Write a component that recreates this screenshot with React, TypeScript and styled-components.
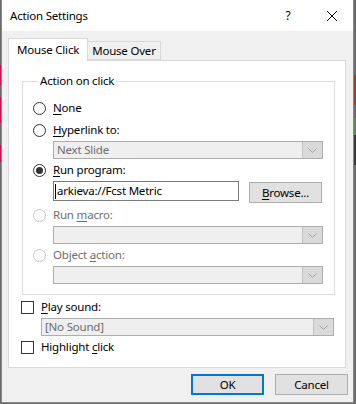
import React from "react";
import styled, { createGlobalStyle } from "styled-components";

const GlobalStyle = createGlobalStyle`
  html, body {
    margin: 0;
    padding: 0;
    background: #6b6b6b;
  }
  body {
    background:
      linear-gradient(#6b6b6b 0 65px, #c8104a 65px 85px, #6b6b6b 85px 97px, #c8104a 97px 123px, #6b6b6b 123px 145px, #c8104a 145px 162px, #6b6b6b 162px) left / 1px 100% no-repeat,
      linear-gradient(#6b6b6b 0 75px, #a03a2a 75px 105px, #6b6b6b 105px 118px, #5a8a5a 118px 135px, #3a3a3a 135px 165px, #6b6b6b 165px) right / 2px 100% no-repeat,
      #6b6b6b;
    font-family: "Noto Sans", "Open Sans", sans-serif;
    font-size: 11.5px;
    letter-spacing: -0.2px;
    color: #000;
  }
`;

const Window = styled.div`
  margin-left: 1px;
  width: 353px;
  height: 403px;
  box-sizing: border-box;
  border: 1px solid #888;
  border-top: none;
  background: #f0f0f0;
  display: flex;
  flex-direction: column;
`;

const TitleBar = styled.div`
  height: 31px;
  background: #fff;
  display: flex;
  align-items: center;
  padding-left: 8px;
`;

const Title = styled.div`
  flex: 1;
  line-height: 16px;
`;

const TitleButton = styled.div<{ $w: number }>`
  width: ${(p) => p.$w}px;
  height: 31px;
  display: flex;
  align-items: center;
  justify-content: center;
  font-size: 12px;
`;

const Body = styled.div`
  flex: 1;
  display: flex;
  flex-direction: column;
  padding: 7px 7px 0 6px;
`;

const TabStrip = styled.div`
  display: flex;
  align-items: flex-end;
  height: 22px;
  position: relative;
  z-index: 1;
`;

const Tab = styled.div<{ $active?: boolean }>`
  box-sizing: border-box;
  height: ${(p) => (p.$active ? 23 : 19)}px;
  margin-bottom: ${(p) => (p.$active ? -1 : 0)}px;
  padding: 0 ${(p) => (p.$active ? 8 : 4)}px;
  border: 1px solid #d9d9d9;
  border-bottom: ${(p) => (p.$active ? "none" : "1px solid #d9d9d9")};
  border-left: ${(p) => (p.$active ? "1px solid #d9d9d9" : "none")};
  background: ${(p) => (p.$active ? "#fff" : "#f0f0f0")};
  display: flex;
  align-items: center;
  line-height: 16px;
`;

const Panel = styled.div`
  box-sizing: border-box;
  width: 338px;
  height: 308px;
  border: 1px solid #d9d9d9;
  background: #fff;
  padding: 12px 10px 0 13px;
  display: flex;
  flex-direction: column;
`;

const GroupBox = styled.fieldset`
  margin: 0;
  border: 1px solid #dcdcdc;
  padding: 11px 10px 10px 10px;
  display: flex;
  flex-direction: column;
`;

const Legend = styled.legend`
  padding: 0 2px;
  margin-left: 5px;
  line-height: 16px;
`;

const Row = styled.div<{ $mt?: number }>`
  display: flex;
  align-items: center;
  height: 16px;
  margin-top: ${(p) => p.$mt ?? 0}px;
`;

const Radio = styled.span<{ $checked?: boolean; $disabled?: boolean }>`
  box-sizing: border-box;
  width: 13px;
  height: 13px;
  border-radius: 50%;
  border: 1px solid ${(p) => (p.$disabled ? "#c6c6c6" : "#333")};
  background: #fff;
  margin-right: 7px;
  display: flex;
  align-items: center;
  justify-content: center;
  &::after {
    content: "";
    width: 7px;
    height: 7px;
    border-radius: 50%;
    background: ${(p) => (p.$checked ? "#333" : "transparent")};
  }
`;

const Checkbox = styled.span`
  box-sizing: border-box;
  width: 13px;
  height: 13px;
  border: 1px solid #333;
  background: #fff;
  margin-right: 7px;
`;

const CheckRow = styled(Row)`
  margin-left: -1px;
`;

const Label = styled.span<{ $disabled?: boolean }>`
  line-height: 16px;
  color: ${(p) => (p.$disabled ? "#6d6d6d" : "#000")};
  u {
    text-decoration-thickness: 1px;
    text-underline-offset: 2px;
  }
`;

const Indent = styled.div<{ $left: number; $mt: number }>`
  margin-left: ${(p) => p.$left}px;
  margin-top: ${(p) => p.$mt}px;
  display: flex;
  align-items: flex-start;
`;

const Combo = styled.div<{ $w: number }>`
  box-sizing: border-box;
  width: ${(p) => p.$w}px;
  height: 18px;
  border: 1px solid #adadad;
  background: #efefef;
  display: flex;
  align-items: stretch;
`;

const ComboText = styled.span`
  flex: 1;
  padding-left: 3px;
  color: #6d6d6d;
  line-height: 16px;
`;

const ComboButton = styled.span`
  box-sizing: border-box;
  width: 20px;
  border-left: 1px solid #c2c2c2;
  background: #dadada;
  display: flex;
  align-items: center;
  justify-content: center;
`;

const TextInput = styled.div`
  box-sizing: border-box;
  width: 186px;
  height: 20px;
  border: 1px solid #7a7a7a;
  background: #fff;
  display: flex;
  align-items: center;
  padding-left: 1px;
  line-height: 16px;
`;

const Caret = styled.span`
  width: 1px;
  height: 15px;
  background: #000;
  margin-right: 1px;
`;

const Button = styled.div<{ $default?: boolean; $ml?: number; $mt?: number }>`
  box-sizing: border-box;
  width: 73px;
  height: 21px;
  margin-left: ${(p) => p.$ml ?? 0}px;
  margin-top: ${(p) => p.$mt ?? 0}px;
  border: ${(p) => (p.$default ? "2px solid #0078d7" : "1px solid #adadad")};
  background: #e1e1e1;
  display: flex;
  align-items: center;
  justify-content: center;
  line-height: 16px;
  u {
    text-decoration-thickness: 1px;
    text-underline-offset: 2px;
  }
`;

const Footer = styled.div`
  display: flex;
  justify-content: flex-end;
  gap: 11px;
  padding-top: 6px;
  margin-right: -2px;
`;

const Chevron = () => (
  <svg width="9" height="5" viewBox="0 0 9 5">
    <path d="M0.5 0.5 L4.5 4.5 L8.5 0.5" fill="none" stroke="#a3a3a3" strokeWidth="1" />
  </svg>
);

const CloseIcon = () => (
  <svg width="10" height="10" viewBox="0 0 10 10">
    <path d="M0 0 L10 10 M10 0 L0 10" stroke="#000" strokeWidth="1" />
  </svg>
);

const DropDown = ({ w, text }: { w: number; text?: string }) => (
  <Combo $w={w}>
    <ComboText>{text}</ComboText>
    <ComboButton>
      <Chevron />
    </ComboButton>
  </Combo>
);

export default function App() {
  return (
    <>
      <GlobalStyle />
      <Window>
        <TitleBar>
          <Title>Action Settings</Title>
          <TitleButton $w={46}>?</TitleButton>
          <TitleButton $w={42}>
            <CloseIcon />
          </TitleButton>
        </TitleBar>
        <Body>
          <TabStrip>
            <Tab $active>Mouse Click</Tab>
            <Tab>Mouse Over</Tab>
          </TabStrip>
          <Panel>
            <GroupBox>
              <Legend>Action on click</Legend>
              <Row>
                <Radio />
                <Label>
                  <u>N</u>one
                </Label>
              </Row>
              <Row $mt={6}>
                <Radio />
                <Label>
                  <u>H</u>yperlink to:
                </Label>
              </Row>
              <Indent $left={20} $mt={3}>
                <DropDown w={270} text="Next Slide" />
              </Indent>
              <Row $mt={3}>
                <Radio $checked />
                <Label>
                  <u>R</u>un program:
                </Label>
              </Row>
              <Indent $left={20} $mt={3}>
                <TextInput>
                  <Caret />
                  arkieva://Fcst Metric
                </TextInput>
                <Button $ml={10} $mt={1}>
                  <span>
                    <u>B</u>rowse...
                  </span>
                </Button>
              </Indent>
              <Row $mt={4}>
                <Radio $disabled />
                <Label $disabled>
                  Run <u>m</u>acro:
                </Label>
              </Row>
              <Indent $left={20} $mt={3}>
                <DropDown w={270} />
              </Indent>
              <Row $mt={3}>
                <Radio $disabled />
                <Label $disabled>
                  Object <u>a</u>ction:
                </Label>
              </Row>
              <Indent $left={20} $mt={3}>
                <DropDown w={270} />
              </Indent>
            </GroupBox>
            <CheckRow $mt={4}>
              <Checkbox />
              <Label>
                <u>P</u>lay sound:
              </Label>
            </CheckRow>
            <Indent $left={19} $mt={3}>
              <DropDown w={293} text="[No Sound]" />
            </Indent>
            <CheckRow $mt={3}>
              <Checkbox />
              <Label>
                Highlight <u>c</u>lick
              </Label>
            </CheckRow>
          </Panel>
          <Footer>
            <Button $default>OK</Button>
            <Button>Cancel</Button>
          </Footer>
        </Body>
      </Window>
    </>
  );
}
